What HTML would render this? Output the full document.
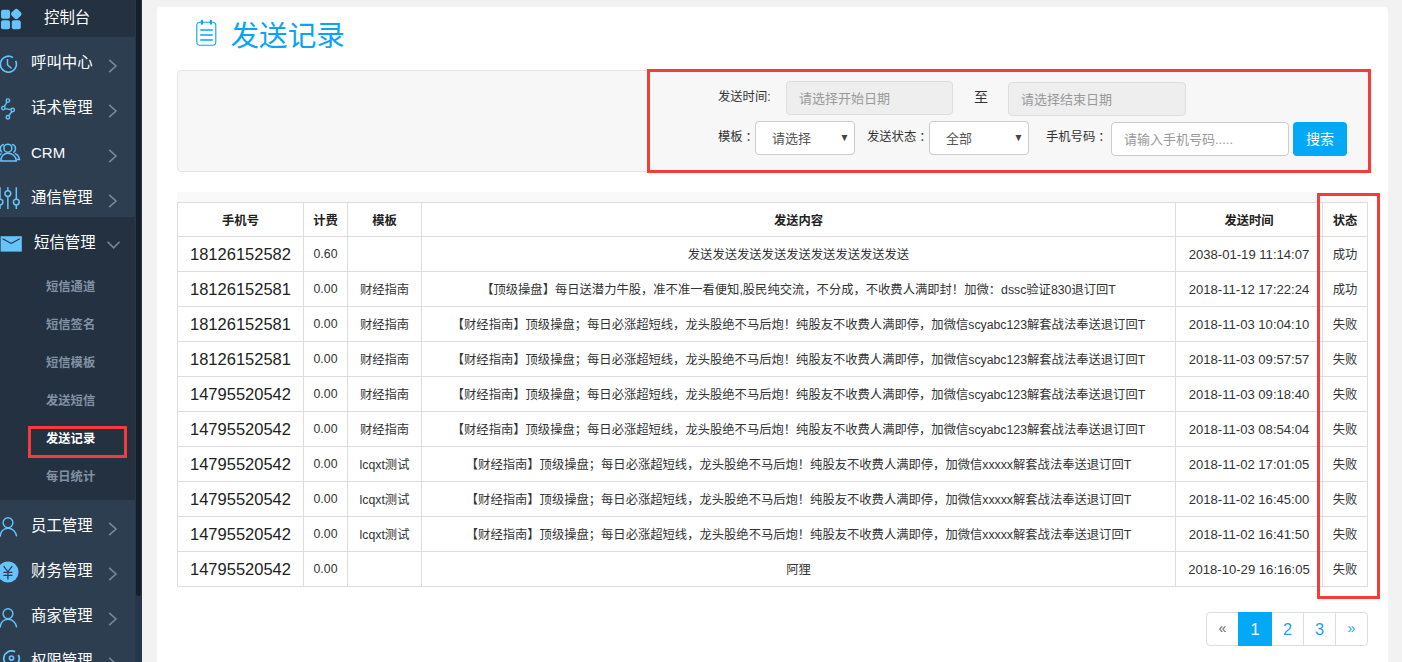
<!DOCTYPE html>
<html lang="zh-CN">
<head>
<meta charset="utf-8">
<title>发送记录</title>
<style>
*{box-sizing:border-box;margin:0;padding:0}
html,body{width:1402px;height:662px;overflow:hidden}
body{background:#f2f2f2;font-family:"Liberation Sans","Noto Sans CJK SC",sans-serif;color:#333;font-size:13px;position:relative}
.abs{position:absolute}
/* sidebar */
#side{position:absolute;left:0;top:0;width:142px;height:662px;background:#2c3e50;overflow:hidden}
.mi{position:absolute;left:0;width:137px;height:44px;color:#fff;font-size:15.4px;line-height:44px}
.mi .t{position:absolute;left:31px;top:0.5px;white-space:nowrap}
.mi svg.ic{position:absolute;left:0;top:12px}
.mi svg.ar{position:absolute;left:106px;top:16px}
.sub{position:absolute;left:0;width:137px;height:38px;line-height:38px;color:#8391a5;font-size:12.3px;text-align:center;font-weight:bold}
.sub span{position:absolute;left:46px;top:0;white-space:nowrap}
/* panel */
#panel{position:absolute;left:157px;top:7px;width:1231px;height:660px;background:#fff;border-radius:4px}
#title{position:absolute;left:230.5px;top:15.5px;font-size:28.6px;line-height:40px;color:#0aa4f3;white-space:nowrap}
#filter{position:absolute;left:177px;top:70px;width:1192px;height:102px;background:#f7f7f7;border:1px solid #e5e5e5;border-radius:4px}
.lab{position:absolute;font-size:12.3px;color:#333;white-space:nowrap;line-height:20px}
.inp{position:absolute;height:34px;border:1px solid #ccc;border-radius:4px;background:#fff;font-size:13px;line-height:32px;color:#999;white-space:nowrap}
.inp.dis{background:#eee;border-color:#ddd}
.inp .tx{position:absolute;left:12px;top:1px}
.sel{color:#555}
.sel .tx{left:16px}
.sel .dn{position:absolute;right:5px;top:-1.5px;font-size:10.5px;color:#444;transform:scaleX(.95);transform-origin:right center}
#btn{position:absolute;left:1293px;top:122px;width:54px;height:34px;border-radius:4px;background:#03a9f4;color:#fff;font-size:14px;line-height:34px;text-align:center}
.red{position:absolute;border:3px solid #f73a3a}
/* table */
#band{position:absolute;left:177px;top:192px;width:1191px;height:11px;background:#f9f9f9}
table{position:absolute;left:177px;top:202px;width:1191px;border-collapse:collapse;table-layout:fixed;background:#fff}
td,th{border:1px solid #ddd;text-align:center;font-size:12.3px;color:#333;height:35px;white-space:nowrap;overflow:hidden;padding:0}
th{height:34px;font-weight:bold;font-size:12.3px;color:#222}
td.ph{font-size:16.5px;color:#222}
td.dt{font-size:13.1px}
/* pager */
#pager span{position:absolute;top:612px;height:34px;border:1px solid #ddd;background:#fff;color:#1e9ff2;font-size:16.4px;line-height:32px;text-align:center}
#pager span.on{background:#03a9f4;border-color:#03a9f4;color:#fff}
#pager span.f{border-radius:4px 0 0 4px;color:#666;font-size:14px;line-height:31px}
#pager span.l{border-radius:0 4px 4px 0;font-size:14px;line-height:31px}
</style>
</head>
<body>
<div id="side">
  <div class="abs" style="left:0;top:0;width:142px;height:37px;background:#233140"></div>
  <div class="abs" style="left:0;top:217px;width:142px;height:283px;background:#233140"></div>
  <svg class="abs" style="left:0;top:8px" width="24" height="22" viewBox="0 0 24 22"><g fill="#66c4fb"><rect x="1" y="1.8" width="9" height="9" rx="2"/><rect x="1" y="12.2" width="9" height="9" rx="2"/><rect x="11.8" y="12.2" width="9" height="9" rx="2"/><rect x="12" y="1.7" width="8.6" height="8.6" rx="2.3" transform="rotate(45 16.3 6)"/></g></svg>
  <div class="mi" style="top:-4.5px"><span class="t" style="left:44px;font-size:15.4px">控制台</span></div>
  <svg class="abs" style="left:0;top:55px" width="18" height="19" viewBox="0 0 18 19"><path d="M12.99 2.65 A8 8 0 1 0 15.65 5.82" fill="none" stroke="#66c4fb" stroke-width="1.6"/><path d="M7.5 4 V9.9 L11.6 13.5" fill="none" stroke="#66c4fb" stroke-width="1.5"/></svg>
  <div class="mi" style="top:40.8px"><span class="t" style="left:31px;font-size:15.4px">呼叫中心</span></div><svg class="abs" style="left:107px;top:57.5px" width="12" height="16" viewBox="0 0 12 16"><path d="M2.2 1.8 L9 8 L2.2 14.2" fill="none" stroke="#7b8798" stroke-width="1.6"/></svg>
  <svg class="abs" style="left:0;top:97px" width="17" height="24" viewBox="0 0 17 24"><g fill="none" stroke="#66c4fb" stroke-width="1.4"><path d="M7 5.2 L4.2 9.6 M5.2 11.6 L10.9 12.6 M11.8 14.8 L8.8 18.6"/><circle cx="7.9" cy="3.6" r="1.75"/><circle cx="3.4" cy="11.1" r="1.75"/><circle cx="12.7" cy="13" r="1.75"/><circle cx="7.9" cy="20.3" r="1.75"/></g></svg>
  <div class="mi" style="top:85.8px"><span class="t" style="left:31px;font-size:15.4px">话术管理</span></div><svg class="abs" style="left:107px;top:102.5px" width="12" height="16" viewBox="0 0 12 16"><path d="M2.2 1.8 L9 8 L2.2 14.2" fill="none" stroke="#7b8798" stroke-width="1.6"/></svg>
  <svg class="abs" style="left:0;top:141px" width="21" height="22" viewBox="0 0 21 22"><g fill="none" stroke="#66c4fb" stroke-width="1.5"><path d="M11.8 3.4 C14.6 3.4 16 6.2 15.3 8.8 C15 10 14.3 11 13.3 11.6 M14.7 12.5 C17.5 13.5 19.1 15.7 19.5 18.6 H17 M4 3.4 C1.1 3.6 -0.2 6.4 0.5 8.9 C0.8 10.1 1.5 10.9 2.3 11.5 M1.5 12.6 C0.7 13 0.1 13.6 -0.5 14.3"/><circle cx="7.85" cy="7.2" r="4"/><path d="M0.9 20.1 C0.9 15 3.8 12.2 7.85 12.2 C11.9 12.2 16.3 15 16.3 20.1 Z"/></g></svg>
  <div class="mi" style="top:130.5px"><span class="t" style="left:31px;font-size:15px">CRM</span></div><svg class="abs" style="left:107px;top:147.5px" width="12" height="16" viewBox="0 0 12 16"><path d="M2.2 1.8 L9 8 L2.2 14.2" fill="none" stroke="#7b8798" stroke-width="1.6"/></svg>
  <svg class="abs" style="left:0;top:186px" width="21" height="24" viewBox="0 0 21 24"><g fill="none" stroke="#66c4fb" stroke-width="1.5"><path d="M0 1.2 V13.2 M0 19 V23 M7.85 1.2 V4.7 M7.85 10.5 V23 M16.3 1.2 V13.2 M16.3 19 V23"/><circle cx="0" cy="16.1" r="2.9"/><circle cx="7.85" cy="7.6" r="2.9"/><circle cx="16.3" cy="16.1" r="2.9"/></g></svg>
  <div class="mi" style="top:175.8px"><span class="t" style="left:31px;font-size:15.4px">通信管理</span></div><svg class="abs" style="left:107px;top:192.5px" width="12" height="16" viewBox="0 0 12 16"><path d="M2.2 1.8 L9 8 L2.2 14.2" fill="none" stroke="#7b8798" stroke-width="1.6"/></svg>
  <svg class="abs" style="left:0;top:235px" width="23" height="18" viewBox="0 0 23 18"><rect x="0.6" y="1.2" width="21.2" height="15.4" fill="#66c4fb"/><path d="M2.6 3.7 L11.2 8.4 L19.8 3.7" fill="none" stroke="#233140" stroke-width="1.1"/></svg>
  <div class="mi" style="top:220.6px"><span class="t" style="left:34px;font-size:15.4px">短信管理</span></div>
  <svg class="abs" style="left:106px;top:240px" width="16" height="10" viewBox="0 0 16 10"><path d="M1.6 1.8 L7.6 7.8 L13.6 1.8" fill="none" stroke="#7b8798" stroke-width="1.6"/></svg>
  <div class="sub" style="top:268px"><span>短信通道</span></div>
  <div class="sub" style="top:306px"><span>短信签名</span></div>
  <div class="sub" style="top:344px"><span>短信模板</span></div>
  <div class="sub" style="top:382px"><span>发送短信</span></div>
  <div class="sub" style="top:420px;color:#fff"><span>发送记录</span></div>
  <div class="sub" style="top:458px"><span>每日统计</span></div>
  <svg class="abs" style="left:0;top:516px" width="20" height="22" viewBox="0 0 20 22"><circle cx="8" cy="6.7" r="4.9" fill="none" stroke="#66c4fb" stroke-width="1.4"/><path d="M0.1 20.6 C0.5 15.6 3.6 12.2 8 12.2 C12.4 12.2 15.9 15.6 16.7 20.4" fill="none" stroke="#66c4fb" stroke-width="1.4"/></svg>
  <div class="mi" style="top:503.79999999999995px"><span class="t" style="left:31px;font-size:15.4px">员工管理</span></div><svg class="abs" style="left:107px;top:520.5px" width="12" height="16" viewBox="0 0 12 16"><path d="M2.2 1.8 L9 8 L2.2 14.2" fill="none" stroke="#7b8798" stroke-width="1.6"/></svg>
  <svg class="abs" style="left:0;top:561px" width="20" height="22" viewBox="0 0 20 22"><circle cx="8" cy="11" r="10.6" fill="#66c4fb"/><path d="M3.6 5.2 L7.9 10.8 L12.2 5.2 M7.9 10.8 V18.4 M3.4 11.4 H12.4 M3.4 14.4 H12.4" fill="none" stroke="#2c3e50" stroke-width="1.3"/></svg>
  <div class="mi" style="top:548.8px"><span class="t" style="left:31px;font-size:15.4px">财务管理</span></div><svg class="abs" style="left:107px;top:565.5px" width="12" height="16" viewBox="0 0 12 16"><path d="M2.2 1.8 L9 8 L2.2 14.2" fill="none" stroke="#7b8798" stroke-width="1.6"/></svg>
  <svg class="abs" style="left:0;top:606.5px" width="20" height="22" viewBox="0 0 20 22"><circle cx="8" cy="6.7" r="4.9" fill="none" stroke="#66c4fb" stroke-width="1.4"/><path d="M0.1 20.6 C0.5 15.6 3.6 12.2 8 12.2 C12.4 12.2 15.9 15.6 16.7 20.4" fill="none" stroke="#66c4fb" stroke-width="1.4"/></svg>
  <div class="mi" style="top:593.8px"><span class="t" style="left:31px;font-size:15.4px">商家管理</span></div><svg class="abs" style="left:107px;top:610.5px" width="12" height="16" viewBox="0 0 12 16"><path d="M2.2 1.8 L9 8 L2.2 14.2" fill="none" stroke="#7b8798" stroke-width="1.6"/></svg>
  <svg class="abs" style="left:0;top:650px" width="22" height="14" viewBox="0 0 22 14"><path d="M15.11 1.80 A7.7 7.7 0 1 0 18.30 4.99" fill="none" stroke="#66c4fb" stroke-width="1.8"/><circle cx="11.5" cy="8.1" r="2.1" fill="none" stroke="#66c4fb" stroke-width="1.7"/></svg>
  <div class="mi" style="top:638.8px"><span class="t" style="left:31px;font-size:15.4px">权限管理</span></div><svg class="abs" style="left:107px;top:655.5px" width="12" height="16" viewBox="0 0 12 16"><path d="M2.2 1.8 L9 8 L2.2 14.2" fill="none" stroke="#7b8798" stroke-width="1.6"/></svg>
  <div class="abs" style="left:135px;top:0;width:7px;height:662px;background:#27374a"></div>
  <div class="abs" style="left:136px;top:-5px;width:5px;height:601px;background:#161e27;border-radius:3px"></div>
</div>
<div class="red" style="left:28px;top:426px;width:99px;height:32px"></div>

<div id="panel"></div>
<svg class="abs" style="left:195px;top:19px" width="23" height="28" viewBox="0 0 23 28"><rect x="1.8" y="3.2" width="19" height="23" rx="3.2" fill="none" stroke="#0aa4f3" stroke-width="1.1"/><rect x="5.8" y="0.8" width="2.2" height="5" rx="1.1" fill="#0aa4f3"/><rect x="14.8" y="0.8" width="2.2" height="5" rx="1.1" fill="#0aa4f3"/><path d="M5.2 11 H17.8 M5.2 16 H17.8 M5.2 21 H17.8" stroke="#0aa4f3" stroke-width="1.7"/></svg>
<div id="title">发送记录</div>

<div id="filter"></div>
<div class="lab" style="left:718px;top:87px">发送时间:</div>
<div class="inp dis" style="left:786px;top:81px;width:167px"><span class="tx">请选择开始日期</span></div>
<div class="lab" style="left:974px;top:87px;font-size:14px">至</div>
<div class="inp dis" style="left:1008px;top:82px;width:178px"><span class="tx">请选择结束日期</span></div>
<div class="lab" style="left:718px;top:127px">模板<span style="position:relative;left:3px">：</span></div>
<div class="inp sel" style="left:755px;top:121px;width:100px"><span class="tx">请选择</span><span class="dn">▼</span></div>
<div class="lab" style="left:867px;top:127px">发送状态<span style="position:relative;left:3px">：</span></div>
<div class="inp sel" style="left:929px;top:121px;width:100px"><span class="tx">全部</span><span class="dn">▼</span></div>
<div class="lab" style="left:1046px;top:127px">手机号码<span style="position:relative;left:3px">：</span></div>
<div class="inp" style="left:1111px;top:122px;width:178px"><span class="tx">请输入手机号码.....</span></div>
<div id="btn">搜索</div>
<div class="red" style="left:647px;top:69px;width:724px;height:104px"></div>

<div id="band"></div>
<table>
<colgroup><col style="width:126px"><col style="width:44px"><col style="width:74px"><col style="width:754px"><col style="width:147px"><col style="width:45px"></colgroup>
<tr><th>手机号</th><th>计费</th><th>模板</th><th>发送内容</th><th>发送时间</th><th>状态</th></tr>
<tr><td class="ph">18126152582</td><td>0.60</td><td></td><td>发送发送发送发送发送发送发送发送发送</td><td class="dt">2038-01-19 11:14:07</td><td>成功</td></tr>
<tr><td class="ph">18126152581</td><td>0.00</td><td>财经指南</td><td>【顶级操盘】每日送潜力牛股，准不准一看便知,股民纯交流，不分成，不收费人满即封！加微：dssc验证830退订回T</td><td class="dt">2018-11-12 17:22:24</td><td>成功</td></tr>
<tr><td class="ph">18126152581</td><td>0.00</td><td>财经指南</td><td>【财经指南】顶级操盘；每日必涨超短线，龙头股绝不马后炮！纯股友不收费人满即停，加微信scyabc123解套战法奉送退订回T</td><td class="dt">2018-11-03 10:04:10</td><td>失败</td></tr>
<tr><td class="ph">18126152581</td><td>0.00</td><td>财经指南</td><td>【财经指南】顶级操盘；每日必涨超短线，龙头股绝不马后炮！纯股友不收费人满即停，加微信scyabc123解套战法奉送退订回T</td><td class="dt">2018-11-03 09:57:57</td><td>失败</td></tr>
<tr><td class="ph">14795520542</td><td>0.00</td><td>财经指南</td><td>【财经指南】顶级操盘；每日必涨超短线，龙头股绝不马后炮！纯股友不收费人满即停，加微信scyabc123解套战法奉送退订回T</td><td class="dt">2018-11-03 09:18:40</td><td>失败</td></tr>
<tr><td class="ph">14795520542</td><td>0.00</td><td>财经指南</td><td>【财经指南】顶级操盘；每日必涨超短线，龙头股绝不马后炮！纯股友不收费人满即停，加微信scyabc123解套战法奉送退订回T</td><td class="dt">2018-11-03 08:54:04</td><td>失败</td></tr>
<tr><td class="ph">14795520542</td><td>0.00</td><td>lcqxt测试</td><td>【财经指南】顶级操盘；每日必涨超短线，龙头股绝不马后炮！纯股友不收费人满即停，加微信xxxxx解套战法奉送退订回T</td><td class="dt">2018-11-02 17:01:05</td><td>失败</td></tr>
<tr><td class="ph">14795520542</td><td>0.00</td><td>lcqxt测试</td><td>【财经指南】顶级操盘；每日必涨超短线，龙头股绝不马后炮！纯股友不收费人满即停，加微信xxxxx解套战法奉送退订回T</td><td class="dt">2018-11-02 16:45:00</td><td>失败</td></tr>
<tr><td class="ph">14795520542</td><td>0.00</td><td>lcqxt测试</td><td>【财经指南】顶级操盘；每日必涨超短线，龙头股绝不马后炮！纯股友不收费人满即停，加微信xxxxx解套战法奉送退订回T</td><td class="dt">2018-11-02 16:41:50</td><td>失败</td></tr>
<tr><td class="ph">14795520542</td><td>0.00</td><td></td><td>阿狸</td><td class="dt">2018-10-29 16:16:05</td><td>失败</td></tr>
</table>
<div class="red" style="left:1317px;top:193px;width:63px;height:406px"></div>

<div id="pager"><span class="f" style="left:1206px;width:33px">«</span><span style="left:1271px;width:33px">2</span><span style="left:1303px;width:33px">3</span><span class="l" style="left:1335px;width:33px">»</span><span class="on" style="left:1238px;width:34px">1</span></div>
</body>
</html>
